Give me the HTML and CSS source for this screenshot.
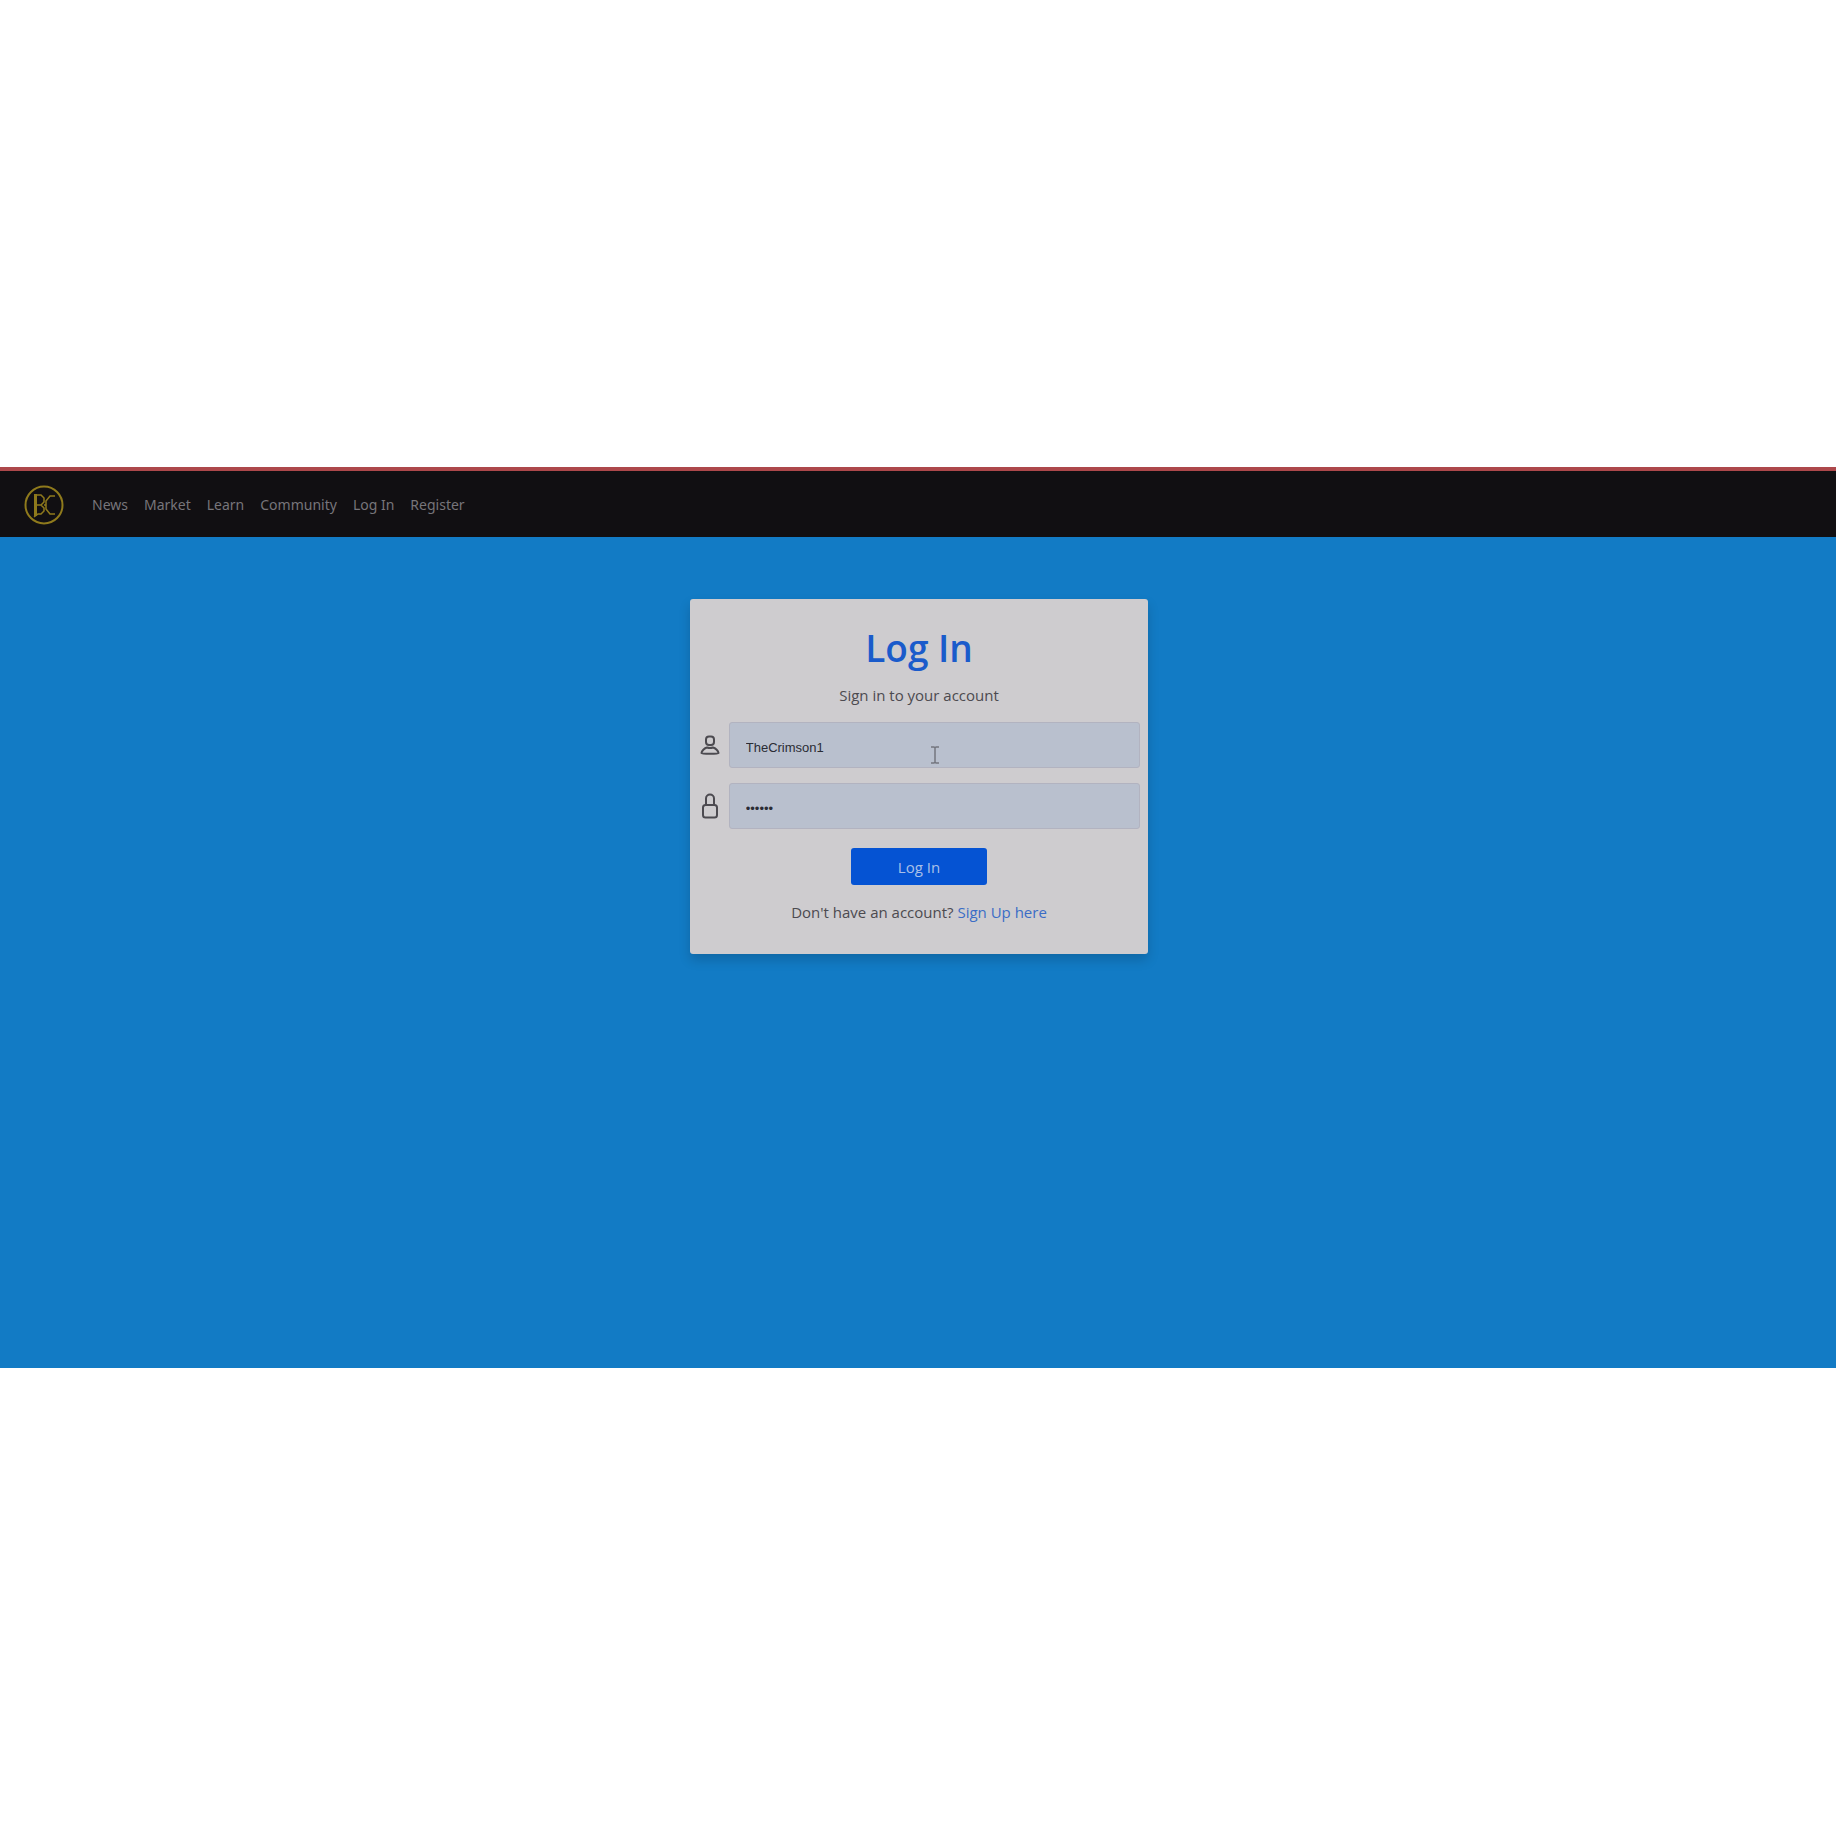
FILE: index.html
```html
<!DOCTYPE html>
<html lang="en">
<head>
<meta charset="utf-8">
<meta name="viewport" content="width=device-width, initial-scale=1">
<title>Log In</title>
<link rel="stylesheet" href="styles.css">
</head>
<body>
<div class="site">
  <header class="navbar">
    <a class="brand" href="#" aria-label="Home">
      <svg width="40" height="40" viewBox="0 0 40 40" fill="none" stroke="currentColor">
        <circle cx="20" cy="20" r="18.5" stroke-width="2"/>
        <path d="M11.5 9v22" stroke-width="3"/>
        <path d="M10 10h7l3 3v4l-3 3h-5M17 20l3 3v3l-3 3h-3l-4 3" stroke-width="1.5"/>
        <path d="M31 11h-5l-4 5v8l4 5h5M20 20h2" stroke-width="1.5"/>
      </svg>
    </a>
    <nav class="links">
      <a href="#">News</a>
      <a href="#">Market</a>
      <a href="#">Learn</a>
      <a href="#">Community</a>
      <a href="#">Log In</a>
      <a href="#">Register</a>
    </nav>
  </header>
  <main class="content">
    <form class="card">
      <h1 class="title">Log In</h1>
      <p class="subtitle">Sign in to your account</p>
      <div class="field">
        <label for="username" aria-label="Username">
          <svg width="20" height="20" viewBox="0 0 20 20" fill="none" stroke="currentColor" stroke-width="2" stroke-linejoin="round">
            <rect x="6" y="1.500" width="8" height="8.500" rx="3"/>
            <path d="M1.500 18c0-2 3-5 5.500-5.500q3 1 6 0c2.500.5 5.500 3.500 5.500 5.500-.5 1-16.500 1-17 0z"/>
          </svg>
        </label>
        <span class="control">
          <input id="username" type="text" value="TheCrimson1">
          <svg class="cursor" width="10" height="18" viewBox="0 0 10 18" fill="none" stroke="currentColor" stroke-width="1.5">
            <path d="M1 1h3l1 1 1-1h3M5 2v14M1 17h3l1-1 1 1h3"/>
          </svg>
        </span>
      </div>
      <div class="field">
        <label for="password" aria-label="Password">
          <svg width="18" height="26" viewBox="0 0 18 26" fill="none" stroke="currentColor" stroke-width="2">
            <path d="M5 12V5.500a4 4 0 0 1 8 0V12"/>
            <rect x="2" y="12" width="14" height="12.500" rx="2.500"/>
          </svg>
        </label>
        <span class="control"><input id="password" type="password" value="abc123"></span>
      </div>
      <button class="submit" type="submit">Log In</button>
      <p class="signup">Don't have an account? <a href="#">Sign Up here</a></p>
    </form>
  </main>
</div>
</body>
</html>
```
FILE: styles.css
```css
* {
  box-sizing: border-box;
}

body {
  margin: 0;
  min-height: 100vh;
  display: flex;
  flex-direction: column;
  justify-content: center;
  padding-bottom: 1px;
  background: #fff;
  color: #4c4a50;
  font-family: "Open Sans", "Noto Sans", sans-serif;
  font-size: 15px;
  line-height: 22px;
}

a {
  color: inherit;
  text-decoration: none;
}

.site {
  display: flex;
  flex-direction: column;
  aspect-ratio: 1836 / 901;
  background: #127bc5;
}

.navbar {
  display: flex;
  align-items: center;
  gap: 28px;
  min-height: 70px;
  padding: 2px 24px 0;
  border-top: 4px solid #ad484b;
  background: #110f12;
}

.brand {
  display: flex;
  color: #8f7a1c;
}

.links {
  display: flex;
  gap: 16px;
  color: #77757a;
  font-family: "Noto Sans", sans-serif;
  font-size: 14px;
}

.content {
  display: flex;
  justify-content: center;
  padding: 62px 0 62px 2px;
}

.card {
  display: flex;
  flex-direction: column;
  align-items: center;
  width: 25%;
  min-width: 400px;
  padding: 25px 8px 31px;
  border-radius: 3px;
  background: #cecccf;
  box-shadow: 0 6px 12px rgba(0, 0, 0, 0.16);
}

.title {
  margin: 0 0 12px;
  color: #1a5bcb;
  font-size: 37px;
  font-weight: 600;
  line-height: 48px;
}

.subtitle {
  margin: 0 0 16px;
}

.field {
  display: flex;
  align-items: center;
  width: 100%;
  margin-bottom: 15px;
}

.field label {
  display: flex;
  justify-content: center;
  width: 24px;
  margin-right: 7px;
}

.control {
  position: relative;
  flex: 1;
  display: flex;
}

.control input {
  width: 100%;
  height: 46px;
  padding: 4px 16px 0;
  border: 1px solid #b2b3c0;
  border-radius: 3px;
  background: #b9c0ce;
  color: #2a2c34;
  font: 13px "Liberation Sans", sans-serif;
}

.cursor {
  position: absolute;
  top: 24px;
  left: 49%;
  color: #74767f;
}

.submit {
  width: 136px;
  height: 37px;
  margin: 4px 0 16px;
  padding: 0;
  border: 0;
  border-radius: 3px;
  background: #0553d3;
  color: #a9c0e8;
  font: inherit;
}

.signup {
  margin: 0;
}

.signup a {
  color: #3b6cc6;
}
```
